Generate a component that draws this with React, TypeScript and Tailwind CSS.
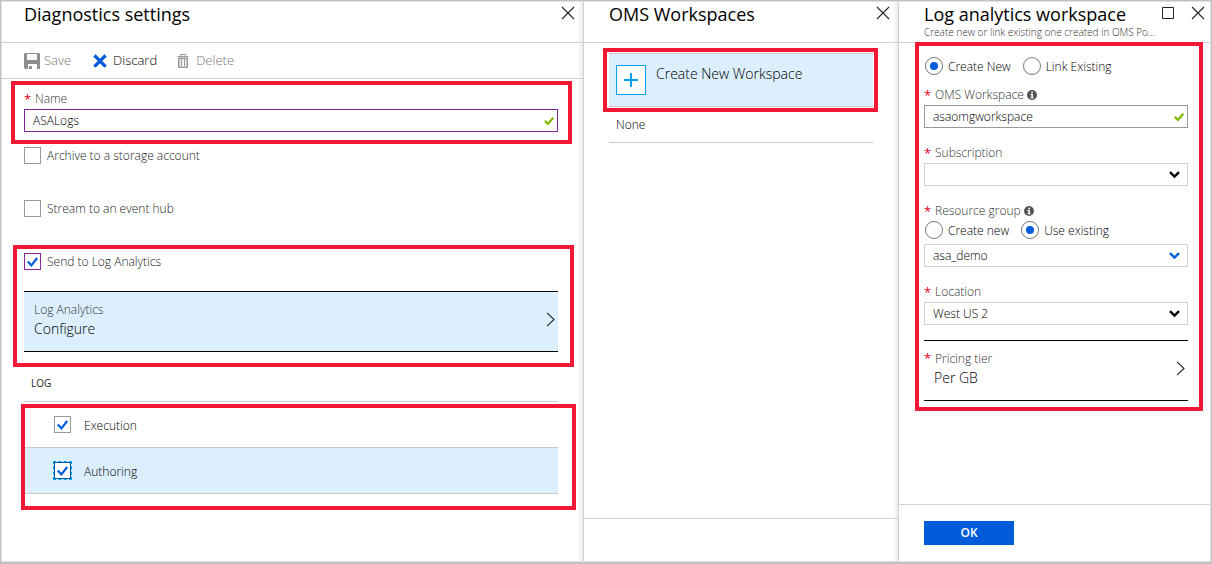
import { useId, useState, type ReactNode } from "react";
import clsx from "clsx";

function CloseIcon() {
  return (
    <svg width="14" height="14" viewBox="0 0 14 14" fill="none" stroke="#222" strokeWidth="1.1">
      <path d="M1 1l12 12M13 1L1 13" />
    </svg>
  );
}

function MaximizeIcon() {
  return (
    <svg width="14" height="14" viewBox="0 0 14 14" fill="none" stroke="#222">
      <path d="M1.5 1.5h11v11h-11z" />
    </svg>
  );
}

function SaveIcon() {
  return (
    <svg width="16" height="16" viewBox="0 0 16 16" fill="#8e8e8e">
      <path fillRule="evenodd" d="M1 0h14l1 1v15H13v-5H4v5H1l-1-1V1zM3 1v6h10V1z" />
      <path d="M5 13h3v3H5z" />
    </svg>
  );
}

function DiscardIcon() {
  return (
    <svg width="14" height="14" viewBox="0 0 14 14" fill="none" stroke="#015cda" strokeWidth="3.4">
      <path d="M1.4 1.4l11.2 11.2M12.6 1.4L1.4 12.6" />
    </svg>
  );
}

function TrashIcon() {
  return (
    <svg width="12" height="14" viewBox="0 0 12 14" fill="none" stroke="#9a9a9a">
      <path d="M0.5 2.5h11M3.5 2V0.5h5V2" />
      <path strokeWidth="1.6" d="M1.8 4.3h8.4v8.9H1.8z" />
      <path strokeWidth="1.2" d="M4.5 5v7M7.5 5v7" />
    </svg>
  );
}

function ValidIcon() {
  return (
    <svg
      className="pointer-events-none absolute top-1/2 right-1 -translate-y-1/2"
      width="10"
      height="9"
      viewBox="0 0 10 9"
      fill="none"
      stroke="#7fba00"
      strokeWidth="2.2"
    >
      <path d="M0.8 4.4l3.2 3L9.2 1.2" />
    </svg>
  );
}

function InfoIcon() {
  return (
    <svg width="10" height="10" viewBox="0 0 10 10">
      <circle cx="5" cy="5" r="5" fill="#555" />
      <path d="M4.2 1.7h1.7v1.5H4.2zM3.5 4h2.4v3.2h.7v1H3.5v-1h.8V5h-.8z" fill="#fff" />
    </svg>
  );
}

function ChevronRight() {
  return (
    <svg width="9" height="15" viewBox="0 0 9 15" fill="none" stroke="#222" strokeWidth="1.1">
      <path d="M1 0.8l7 6.7-7 6.7" />
    </svg>
  );
}

function Panel({
  title,
  subtitle,
  maximize,
  shaded,
  headerClass,
  footer,
  children,
}: {
  title: string;
  subtitle?: string;
  maximize?: boolean;
  shaded?: boolean;
  headerClass: string;
  footer?: ReactNode;
  children: ReactNode;
}) {
  return (
    <section
      className={clsx(
        "flex min-w-0 flex-col",
        shaded &&
          "border-r border-[#d0d0d0] shadow-[inset_-6px_0_4px_-4px_rgba(0,0,0,0.10)]",
      )}
    >
      <header
        className={clsx(
          "flex h-[41px] items-start justify-between border-b border-[#d2d2d2]",
          headerClass,
        )}
      >
        <div className="min-w-0">
          <h2 className="text-[18px] leading-6 font-normal whitespace-nowrap text-black">
            {title}
          </h2>
          {subtitle && (
            <p className="text-[10px] leading-3 whitespace-nowrap text-[#333]">{subtitle}</p>
          )}
        </div>
        <div className="flex shrink-0 gap-4 pt-1">
          {maximize && (
            <button type="button" aria-label="Maximize">
              <MaximizeIcon />
            </button>
          )}
          <button type="button" aria-label="Close">
            <CloseIcon />
          </button>
        </div>
      </header>
      {children}
      {footer}
    </section>
  );
}

type BoxTone = "plain" | "purple" | "focus";

function CheckBox({
  id,
  tone = "plain",
  initial = false,
}: {
  id: string;
  tone?: BoxTone;
  initial?: boolean;
}) {
  const [on, setOn] = useState(initial);
  return (
    <span className="grid size-[17px] shrink-0 place-items-center">
      <input
        id={id}
        type="checkbox"
        checked={on}
        onChange={(e) => setOn(e.target.checked)}
        className={clsx(
          "col-start-1 row-start-1 size-[17px] appearance-none border bg-white",
          tone === "plain" && "border-[#999]",
          tone === "purple" && "border-[#8427a0]",
          tone === "focus" && "border-[#0058ad] outline-1 outline-[#00a1e4] outline-dashed",
        )}
      />
      {on && (
        <svg
          className="pointer-events-none col-start-1 row-start-1"
          width="11"
          height="10"
          viewBox="0 0 11 10"
          fill="none"
          stroke="#015cda"
          strokeWidth="2.2"
        >
          <path d="M0.8 4.6l3.6 3.8L10.2 1" />
        </svg>
      )}
    </span>
  );
}

function CheckRow({ label, tone, initial }: { label: string; tone?: BoxTone; initial?: boolean }) {
  const id = useId();
  return (
    <div className="flex items-center gap-1.5">
      <CheckBox id={id} tone={tone} initial={initial} />
      <label htmlFor={id} className="leading-4 text-[#222]">
        {label}
      </label>
    </div>
  );
}

function FieldLabel({ htmlFor, children, info }: { htmlFor?: string; children: string; info?: boolean }) {
  return (
    <div className="flex h-5 items-center text-[#333]">
      <span className="w-[11px] text-[13px] leading-4 font-normal text-[#e2001a]">*</span>
      <label htmlFor={htmlFor} className="leading-4">
        {children}
      </label>
      {info && (
        <span className="ml-[3px]">
          <InfoIcon />
        </span>
      )}
    </div>
  );
}

function TextField({ id, value, tone }: { id: string; value: string; tone: "purple" | "plain" }) {
  return (
    <div className="relative">
      <input
        id={id}
        type="text"
        defaultValue={value}
        className={clsx(
          "block h-[23px] w-full border bg-white px-2 text-black outline-none",
          tone === "purple" ? "border-[#7f2a9c]" : "border-[#999]",
        )}
      />
      <ValidIcon />
    </div>
  );
}

function SelectField({ id, value, active }: { id: string; value: string; active?: boolean }) {
  return (
    <div className="relative">
      <select
        id={id}
        defaultValue={value}
        className="block h-[23px] w-full appearance-none border border-[#d2d2d2] bg-white px-2 text-black"
      >
        <option value={value}>{value}</option>
      </select>
      <svg
        className="pointer-events-none absolute top-1/2 right-2 -translate-y-1/2"
        width="11"
        height="8"
        viewBox="0 0 11 8"
        fill="none"
        stroke={active ? "#015cda" : "#000"}
        strokeWidth="2.4"
      >
        <path d="M1 1.2l4.5 4.4L10 1.2" />
      </svg>
    </div>
  );
}

function RadioPair({ name, options, initial }: { name: string; options: string[]; initial: number }) {
  const [chosen, setChosen] = useState(initial);
  return (
    <div className="flex gap-3 pl-px" role="radiogroup" aria-label={name}>
      {options.map((option, i) => (
        <label key={option} className="flex h-[18px] items-center gap-[5px] text-black">
          <span className="grid size-[18px] place-items-center">
            <input
              type="radio"
              name={name}
              checked={chosen === i}
              onChange={() => setChosen(i)}
              className="col-start-1 row-start-1 size-[18px] appearance-none rounded-full border border-[#777] bg-white"
            />
            {chosen === i && (
              <span className="pointer-events-none col-start-1 row-start-1 size-2 rounded-full bg-[#015cda]" />
            )}
          </span>
          <span className="pt-px leading-[18px]">{option}</span>
        </label>
      ))}
    </div>
  );
}

function Highlight({ className, children }: { className: string; children: ReactNode }) {
  return <div className={clsx("border-4 border-[#f01834]", className)}>{children}</div>;
}

function DiagnosticsPanel() {
  return (
    <Panel title="Diagnostics settings" headerClass="pl-[22px] pr-2" shaded>
      <div className="flex h-9 items-center border-b border-[#d2d2d2] pl-[22px] text-[13px] text-[#777]">
        <button type="button" disabled className="flex items-center gap-1">
          <SaveIcon />
          Save
        </button>
        <button type="button" className="ml-[22px] flex items-center gap-1.5 text-black">
          <DiscardIcon />
          Discard
        </button>
        <button type="button" disabled className="ml-5 flex items-center gap-[7px]">
          <TrashIcon />
          Delete
        </button>
      </div>

      <Highlight className="mt-0.5 mr-[11px] ml-[9px] pt-1 pr-2.5 pb-2 pl-[9px]">
        <FieldLabel htmlFor="name">Name</FieldLabel>
        <TextField id="name" value="ASALogs" tone="purple" />
      </Highlight>

      <div className="flex flex-col gap-9 pt-[3px] pb-7 pl-[22px]">
        <CheckRow label="Archive to a storage account" />
        <CheckRow label="Stream to an event hub" />
      </div>

      <Highlight className="mr-[9px] ml-[11px] pt-1 pr-3 pb-[11px] pl-[7px]">
        <CheckRow label="Send to Log Analytics" tone="purple" initial />
        <button
          type="button"
          className="mt-[21px] flex h-[61px] w-full items-center justify-between border-y border-black bg-[#dceffe] pr-[3px] pb-1 pl-2.5 text-left"
        >
          <span>
            <span className="block leading-[18px] text-[#333]">Log Analytics</span>
            <span className="block text-[14px] leading-5 text-black">Configure</span>
          </span>
          <ChevronRight />
        </button>
      </Highlight>

      <h3 className="mr-[25px] ml-[22px] h-[35px] border-b border-[#c8c8c8] pt-2 pl-[7px] text-[10px] leading-4 font-normal text-[#222]">
        LOG
      </h3>
      <Highlight className="mt-0.5 mr-[7px] ml-[19px] pr-3.5 pb-3">
        <div className="flex h-10 items-start gap-[13px] border-b border-[#c8c8c8] pt-2 pl-[29px]">
          <CheckBox id="execution" initial />
          <label htmlFor="execution" className="leading-5 text-black">
            Execution
          </label>
        </div>
        <div className="flex h-[46px] items-start gap-[13px] border-b border-[#c8c8c8] bg-[#dceffe] pt-3.5 pl-[29px]">
          <CheckBox id="authoring" tone="focus" initial />
          <label htmlFor="authoring" className="leading-5 text-black">
            Authoring
          </label>
        </div>
      </Highlight>
    </Panel>
  );
}

function WorkspacesPanel() {
  return (
    <Panel
      title="OMS Workspaces"
      headerClass="pl-[25px] pr-2"
      shaded
      footer={<footer className="mt-auto h-[43px] border-t border-[#d2d2d2]" />}
    >
      <Highlight className="mt-[5px] mr-5 ml-[19px] py-px pr-px pl-0.5">
        <button
          type="button"
          className="flex h-[54px] w-full items-start gap-2.5 border-y border-[#c8c8c8] bg-[#dceffe] pt-[11px] pl-[7px] text-left"
        >
          <span className="grid size-[30px] shrink-0 place-items-center border border-[#00a1f1] bg-white">
            <svg width="14" height="14" viewBox="0 0 14 14" stroke="#00a1f1" strokeWidth="2">
              <path d="M7 0v14M0 7h14" />
            </svg>
          </span>
          <span className="text-[14px] leading-[18px] text-black">Create New Workspace</span>
        </button>
      </Highlight>
      <button
        type="button"
        className="mr-[25px] ml-[25px] flex h-[31px] items-start border-b border-[#c8c8c8] pt-[5px] pl-[7px] text-left leading-4 text-black"
      >
        None
      </button>
    </Panel>
  );
}

function LogAnalyticsPanel() {
  return (
    <Panel
      title="Log analytics workspace"
      subtitle="Create new or link existing one created in OMS Po..."
      headerClass="pl-[25px] pr-[5px]"
      maximize
      footer={
        <footer className="mt-auto h-[57px] border-t border-[#d2d2d2] pt-4 pl-[25px]">
          <button type="button" className="h-6 w-[90px] bg-[#015cda] font-semibold text-white">
            OK
          </button>
        </footer>
      }
    >
      <Highlight className="z-10 -mt-px mr-[7px] ml-4 pt-[11px] pr-[11px] pb-1.5 pl-[5px]">
        <RadioPair name="Workspace source" options={["Create New", "Link Existing"]} initial={0} />
        <div className="mt-2.5">
          <FieldLabel htmlFor="workspace" info>
            OMS Workspace
          </FieldLabel>
          <TextField id="workspace" value="asaomgworkspace" tone="plain" />
        </div>
        <div className="mt-[15px]">
          <FieldLabel htmlFor="subscription">Subscription</FieldLabel>
          <SelectField id="subscription" value="" />
        </div>
        <div className="mt-[15px]">
          <FieldLabel htmlFor="group" info>
            Resource group
          </FieldLabel>
          <RadioPair name="Resource group" options={["Create new", "Use existing"]} initial={1} />
          <div className="mt-[5px]">
            <SelectField id="group" value="asa_demo" active />
          </div>
        </div>
        <div className="mt-[15px]">
          <FieldLabel htmlFor="location">Location</FieldLabel>
          <SelectField id="location" value="West US 2" />
        </div>
        <button
          type="button"
          className="mt-[15px] flex h-[61px] w-full items-center justify-between border-y border-black pr-[3px] pb-1 text-left"
        >
          <span>
            <span className="flex leading-[18px] text-[#333]">
              <span className="w-[11px] text-[13px] leading-4 font-normal text-[#e2001a]">*</span>
              Pricing tier
            </span>
            <span className="block pl-2.5 text-[14px] leading-5 text-black">Per GB</span>
          </span>
          <ChevronRight />
        </button>
      </Highlight>
    </Panel>
  );
}

export default function App() {
  return (
    <div className="flex min-h-screen border border-b-2 border-[#c0c0c0] bg-white font-['Open_Sans','Noto_Sans',sans-serif] text-[12px] font-light">
      <main className="grid min-w-0 flex-1 grid-cols-[minmax(0,1fr)_315px_311px] border border-[#e2e2e2]">
        <DiagnosticsPanel />
        <WorkspacesPanel />
        <LogAnalyticsPanel />
      </main>
    </div>
  );
}
